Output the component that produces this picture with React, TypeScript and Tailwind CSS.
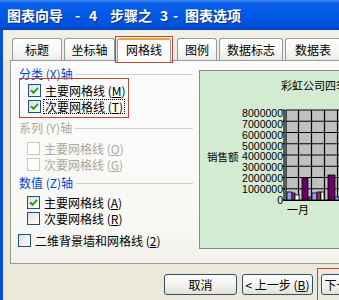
import React from "react";

const FONT = { fontFamily: '"Noto Sans CJK SC", "Noto Sans", sans-serif' };

function Check({ checked = false, disabled = false }: { checked?: boolean; disabled?: boolean }) {
  return (
    <div
      className={
        "w-[13px] h-[13px] shrink-0 border flex items-center justify-center " +
        (disabled
          ? "border-[#cac8bb] bg-white"
          : "border-[#1c5180] bg-[linear-gradient(135deg,#dcdcd7_0%,#f4f4f1_60%,#ffffff_100%)]")
      }
    >
      {checked && (
        <svg width="9" height="9" viewBox="0 0 9 9">
          <path d="M1 4.2 L3.5 6.8 L8 1.8" fill="none" stroke="#21a121" strokeWidth="2" />
        </svg>
      )}
    </div>
  );
}

function Row({
  label,
  k,
  checked,
  disabled,
  focus,
  pad = "pl-[8px]",
  cls = "",
}: {
  label: string;
  k: string;
  checked?: boolean;
  disabled?: boolean;
  focus?: boolean;
  pad?: string;
  cls?: string;
}) {
  return (
    <div className={"h-[16px] flex items-center " + pad + " " + cls}>
      <Check checked={checked} disabled={disabled} />
      <span
        className={
          "ml-[2px] px-[1px] text-[12px] leading-[13px] whitespace-pre " +
          (disabled ? "text-[#aca899] " : "text-black ") +
          (focus ? "border border-dotted border-black" : "border border-transparent")
        }
      >
        {label} (<span className="underline">{k}</span>)
      </span>
    </div>
  );
}

function GroupLabel({ text, disabled, cls = "" }: { text: string; disabled?: boolean; cls?: string }) {
  return (
    <div className={"h-[12px] flex items-center " + cls}>
      <span
        className={
          "text-[12px] leading-[12px] whitespace-pre " + (disabled ? "text-[#aca899]" : "text-[#0046d5]")
        }
      >
        {text}
      </span>
      <div className="flex-1 h-px bg-[#d0d0bf] ml-[3px]" />
    </div>
  );
}

function Tab({ text, w, cls = "" }: { text: string; w: string; cls?: string }) {
  return (
    <div
      className={
        "h-[22px] shrink-0 border border-b-0 border-[#919b9c] rounded-t-[3px] bg-[linear-gradient(to_bottom,#ffffff_0%,#f7f7f4_60%,#ecebe5_100%)] flex items-center justify-center text-[12px] text-black " +
        w +
        " " +
        cls
      }
    >
      {text}
    </div>
  );
}

function Chart() {
  const ys = [0, 1, 2, 3, 4, 5, 6, 7, 8].map((i) => 39 + i * 11.25);
  const labels = ["8000000", "7000000", "6000000", "5000000", "4000000", "3000000", "2000000", "1000000", "0"];
  const bars: [number, number, number, string][] = [
    [87, 92, 121, "#9999ff"],
    [92, 95, 122, "#993366"],
    [95, 99, 124, "#ffffff"],
    [102, 108, 107, "#660066"],
    [108, 112, 126, "#993366"],
    [112, 117, 122, "#9999ff"],
    [117, 121, 121, "#993366"],
    [121, 124, 121, "#ffffff"],
    [128, 135, 104, "#660066"],
    [135, 139, 126, "#9999ff"],
  ];
  return (
    <svg width="160" height="177" viewBox="0 0 160 177" className="block">
      <text x="81" y="19" fontSize="11" fill="#000" style={FONT}>
        彩虹公司四季度销售情况
      </text>
      <text x="7" y="90" fontSize="10.5" fill="#000" style={FONT}>
        销售额
      </text>
      {labels.map((l, i) => (
        <text
          key={l}
          x="83"
          y={42 + i * 10.9 + 3.8}
          fontSize="10.5"
          textAnchor="end"
          fill="#000"
          style={{ fontFamily: '"Liberation Sans", Arial, sans-serif' }}
        >
          {l}
        </text>
      ))}
      <rect x="86" y="39" width="80" height="90" fill="#c0c0c0" />
      {ys.map((y) => (
        <line key={y} x1="86" x2="166" y1={y} y2={y} stroke="#000" strokeWidth="1.2" />
      ))}
      {[86, 98.5, 111.5, 124.5, 137.5, 150.5].map((x) => (
        <line key={x} x1={x} x2={x} y1="39" y2="129" stroke="#000" strokeWidth="1.2" />
      ))}
      <line x1="84" x2="84" y1="39" y2="130" stroke="#000" strokeWidth="1.2" />
      {ys.map((y) => (
        <line key={"t" + y} x1="82" x2="85" y1={y} y2={y} stroke="#000" strokeWidth="1" />
      ))}
      {bars.map(([x1, x2, top, c], i) => (
        <rect key={i} x={x1} y={top} width={x2 - x1} height={129 - top} fill={c} stroke="#000" strokeWidth="0.8" />
      ))}
      <line x1="84" x2="166" y1="129.5" y2="129.5" stroke="#000" strokeWidth="1.2" />
      <text x="87" y="143" fontSize="11" fill="#000" style={FONT}>
        一月
      </text>
    </svg>
  );
}

function Btn({ children, w }: { children: React.ReactNode; w: string }) {
  return (
    <div
      className={
        "h-[21px] shrink-0 rounded-[3px] border border-[#2f4f6f] bg-[linear-gradient(to_bottom,#ffffff_0%,#f4f3ee_50%,#e3e0d6_100%)] flex items-center justify-center text-[12px] text-black whitespace-pre " +
        w
      }
    >
      {children}
    </div>
  );
}

export default function App() {
  return (
    <div className="w-[339px] h-[300px] overflow-hidden flex flex-col bg-[#ece9d8]" style={FONT}>
      {/* title bar */}
      <div className="h-[30px] shrink-0 flex items-center pl-[7px] text-white font-bold text-[14px] bg-[linear-gradient(to_bottom,#3d8af7_0%,#0a5fe8_12%,#0058e6_50%,#0053da_85%,#0042b8_100%)] [text-shadow:1px_1px_0_#0a2e8a]">
        <span className="w-[68px] shrink-0">图表向导</span>
        <span className="w-[14px] shrink-0">-</span>
        <span className="w-[21px] shrink-0">4</span>
        <span className="w-[50px] shrink-0">步骤之</span>
        <span className="w-[13px] shrink-0">3</span>
        <span className="w-[12px] shrink-0">-</span>
        <span className="shrink-0">图表选项</span>
      </div>

      {/* body */}
      <div className="flex-1 flex flex-col border-l-[3px] border-[#0b4fd6] bg-[#ece9d8]">
        {/* tabs */}
        <div className="h-[30px] shrink-0 flex items-end pl-[9px] bg-[#f1efe4]">
          <Tab text="标题" w="w-[50px]" />
          <Tab text="坐标轴" w="w-[51px]" cls="ml-[2px]" />
          <div className="relative z-10 shrink-0 w-[58px] h-[27px] -mb-[3px] border-[1.5px] border-[#b8473a] p-[1px] pb-0">
            <div className="h-full border border-b-0 border-[#919b9c] border-t-[2px] border-t-[#e8a33d] rounded-t-[3px] bg-[#fcfcfe] flex items-center justify-center text-[12px] text-black pb-[3px]">
              网格线
            </div>
          </div>
          <Tab text="图例" w="w-[40px]" cls="ml-[4px]" />
          <Tab text="数据标志" w="w-[64px]" cls="ml-[2px]" />
          <Tab text="数据表" w="w-[56px]" cls="ml-[2px]" />
        </div>

        {/* panel */}
        <div className="ml-[7px] w-[360px] h-[204px] shrink-0 border border-[#919b9c] bg-[linear-gradient(to_bottom,#fcfcfe_0%,#f8f8f5_80%,#f2f1ea_100%)] flex">
          <div className="w-[182px] shrink-0 flex flex-col pl-[8px]">
            <GroupLabel text="分类 (X)轴" cls="mt-[7px]" />
            <div className="-mt-[2px] w-[110px] h-[40px] border-[1.5px] border-[#b8473a] pt-[3px]">
              <Row label="主要网格线" k="M" checked />
              <Row label="次要网格线" k="T" checked focus />
            </div>
            <GroupLabel text="系列 (Y)轴" disabled cls="mt-[4px]" />
            <Row label="主要网格线" k="O" disabled cls="mt-[6px]" />
            <Row label="次要网格线" k="G" disabled />
            <GroupLabel text="数值 (Z)轴" cls="mt-[5px]" />
            <Row label="主要网格线" k="A" checked cls="mt-[5px]" />
            <Row label="次要网格线" k="R" />
            <Row label="二维背景墙和网格线" k="2" pad="pl-0" cls="mt-[6px] -ml-[1px]" />
          </div>
          <div className="ml-[6px] mt-[9px] w-[170px] h-[179px] shrink-0 border border-[#8a8a8a] bg-[#d2ebd2]">
            <Chart />
          </div>
        </div>

        {/* buttons */}
        <div className="mt-[4px] flex items-center pl-[161px]">
          <Btn w="w-[73px]">取消</Btn>
          <Btn w="w-[71px] ml-[5px]">
            {"< "}上一步 (<span className="underline">B</span>)
          </Btn>
          <div className="ml-[4px] shrink-0 w-[80px] h-[33px] border-[1.5px] border-[#b8473a] pl-[2.5px] pt-[5px]">
            <Btn w="w-[73px]">
              下一步 (<span className="underline">N</span>) {">"}
            </Btn>
          </div>
        </div>
      </div>
    </div>
  );
}
